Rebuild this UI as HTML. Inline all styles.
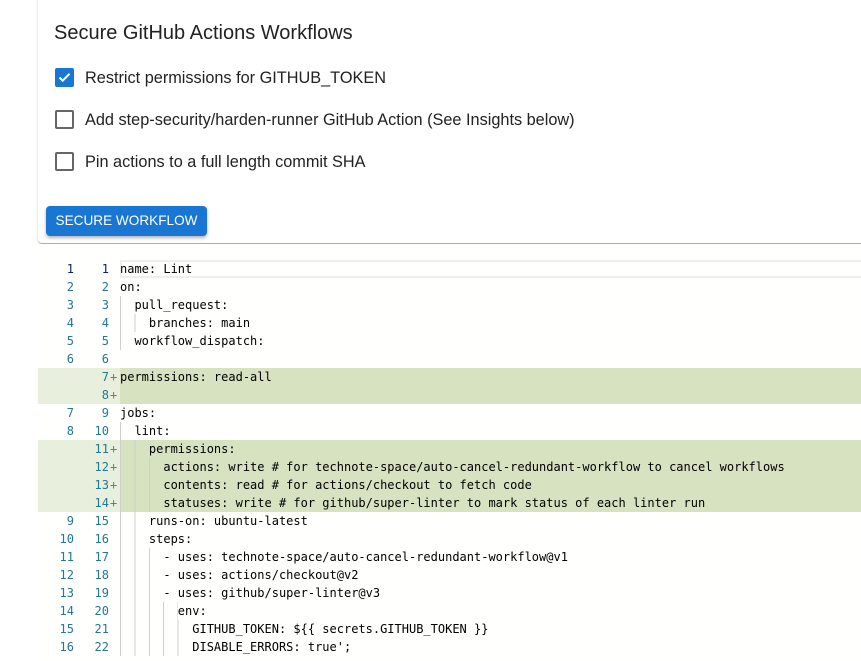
<!DOCTYPE html>
<html><head><meta charset="utf-8"><style>
body{margin:0;width:861px;height:661px;overflow:hidden;background:#fff;font-family:"Liberation Sans",Arial,sans-serif;position:relative}
.card{position:absolute;left:38px;top:-4px;width:840px;height:247px;background:#fff;border-radius:4px;box-shadow:0 2px 1px -1px rgba(0,0,0,.2),0 1px 1px 0 rgba(0,0,0,.14),0 1px 3px 0 rgba(0,0,0,.12)}
h1{position:absolute;left:16px;top:26px;margin:0;font-size:20px;font-weight:400;color:#222}
.cb{position:absolute;left:17px;width:15px;height:15px;border:2px solid #666;border-radius:2px}
.cb.on{background:#1976d2;border-color:#1976d2}
.lab{position:absolute;left:47px;font-size:16.3px;color:#222}
.btn{position:absolute;left:8px;top:210px;width:161px;height:30px;background:#1976d2;border-radius:4px;color:#fff;font-size:13.6px;line-height:30px;text-align:center;letter-spacing:0;box-shadow:0 2px 3px rgba(0,0,0,.3)}
.ed{position:absolute;left:38px;top:244px;width:823px;height:417px;background:#fffffe}
.row{position:absolute;left:0;width:823px;height:18px;font-family:"DejaVu Sans Mono","Liberation Mono",monospace;font-size:12px;line-height:18px;color:#000}
.add{background:#d6e2c0}
.add .g{background:#e8efdd;position:absolute;left:0;top:0;width:82px;height:18px}
.n1,.n2{position:absolute;color:#237893;text-align:right}
.n1{left:0;width:36px}.n2{left:40px;width:31px}
.p{position:absolute;left:72px;color:#777}
.c{position:absolute;left:82px;white-space:pre}
.gd{position:absolute;left:82px;top:0;height:18px;background:repeating-linear-gradient(to right,#cfcfcf 0 1px,transparent 1px 14.4px)}
.cur{position:absolute;left:82px;top:0;width:741px;height:14px;border:2px solid #eee}
</style></head><body>
<div class="card">
<h1>Secure GitHub Actions Workflows</h1>
<div class="cb on" style="top:72px"><svg width="15" height="15" viewBox="0 0 15 15"><path d="M2.5 7.5l3.2 3.2L12.5 3.8" stroke="#fff" stroke-width="2" fill="none"/></svg></div>
<div class="lab" style="top:73px">Restrict permissions for GITHUB_TOKEN</div>
<div class="cb" style="top:114px"></div>
<div class="lab" style="top:115px">Add step-security/harden-runner GitHub Action (See Insights below)</div>
<div class="cb" style="top:156px"></div>
<div class="lab" style="top:157px">Pin actions to a full length commit SHA</div>
<div class="btn">SECURE WORKFLOW</div>
</div>
<div class="ed">
<div class="row" style="top:16px"><div class="cur"></div><span class="n1" style="color:#0b216f">1</span><span class="n2" style="color:#0b216f">1</span><span class="c">name: Lint</span></div>
<div class="row" style="top:34px"><span class="n1">2</span><span class="n2">2</span><span class="c">on:</span></div>
<div class="row" style="top:52px"><div class="gd" style="width:14.4px"></div><span class="n1">3</span><span class="n2">3</span><span class="c">  pull_request:</span></div>
<div class="row" style="top:70px"><div class="gd" style="width:28.8px"></div><span class="n1">4</span><span class="n2">4</span><span class="c">    branches: main</span></div>
<div class="row" style="top:88px"><div class="gd" style="width:14.4px"></div><span class="n1">5</span><span class="n2">5</span><span class="c">  workflow_dispatch:</span></div>
<div class="row" style="top:106px"><span class="n1">6</span><span class="n2">6</span></div>
<div class="row add" style="top:124px"><div class="g"></div><span class="n2">7</span><span class="p">+</span><span class="c">permissions: read-all</span></div>
<div class="row add" style="top:142px"><div class="g"></div><span class="n2">8</span><span class="p">+</span></div>
<div class="row" style="top:160px"><span class="n1">7</span><span class="n2">9</span><span class="c">jobs:</span></div>
<div class="row" style="top:178px"><div class="gd" style="width:14.4px"></div><span class="n1">8</span><span class="n2">10</span><span class="c">  lint:</span></div>
<div class="row add" style="top:196px"><div class="g"></div><div class="gd" style="width:28.8px"></div><span class="n2">11</span><span class="p">+</span><span class="c">    permissions:</span></div>
<div class="row add" style="top:214px"><div class="g"></div><div class="gd" style="width:43.2px"></div><span class="n2">12</span><span class="p">+</span><span class="c">      actions: write # for technote-space/auto-cancel-redundant-workflow to cancel workflows</span></div>
<div class="row add" style="top:232px"><div class="g"></div><div class="gd" style="width:43.2px"></div><span class="n2">13</span><span class="p">+</span><span class="c">      contents: read # for actions/checkout to fetch code</span></div>
<div class="row add" style="top:250px"><div class="g"></div><div class="gd" style="width:43.2px"></div><span class="n2">14</span><span class="p">+</span><span class="c">      statuses: write # for github/super-linter to mark status of each linter run</span></div>
<div class="row" style="top:268px"><div class="gd" style="width:28.8px"></div><span class="n1">9</span><span class="n2">15</span><span class="c">    runs-on: ubuntu-latest</span></div>
<div class="row" style="top:286px"><div class="gd" style="width:28.8px"></div><span class="n1">10</span><span class="n2">16</span><span class="c">    steps:</span></div>
<div class="row" style="top:304px"><div class="gd" style="width:43.2px"></div><span class="n1">11</span><span class="n2">17</span><span class="c">      - uses: technote-space/auto-cancel-redundant-workflow@v1</span></div>
<div class="row" style="top:322px"><div class="gd" style="width:43.2px"></div><span class="n1">12</span><span class="n2">18</span><span class="c">      - uses: actions/checkout@v2</span></div>
<div class="row" style="top:340px"><div class="gd" style="width:43.2px"></div><span class="n1">13</span><span class="n2">19</span><span class="c">      - uses: github/super-linter@v3</span></div>
<div class="row" style="top:358px"><div class="gd" style="width:57.6px"></div><span class="n1">14</span><span class="n2">20</span><span class="c">        env:</span></div>
<div class="row" style="top:376px"><div class="gd" style="width:72px"></div><span class="n1">15</span><span class="n2">21</span><span class="c">          GITHUB_TOKEN: ${{ secrets.GITHUB_TOKEN }}</span></div>
<div class="row" style="top:394px"><div class="gd" style="width:72px"></div><span class="n1">16</span><span class="n2">22</span><span class="c">          DISABLE_ERRORS: true';</span></div>
</div>
</body></html>
